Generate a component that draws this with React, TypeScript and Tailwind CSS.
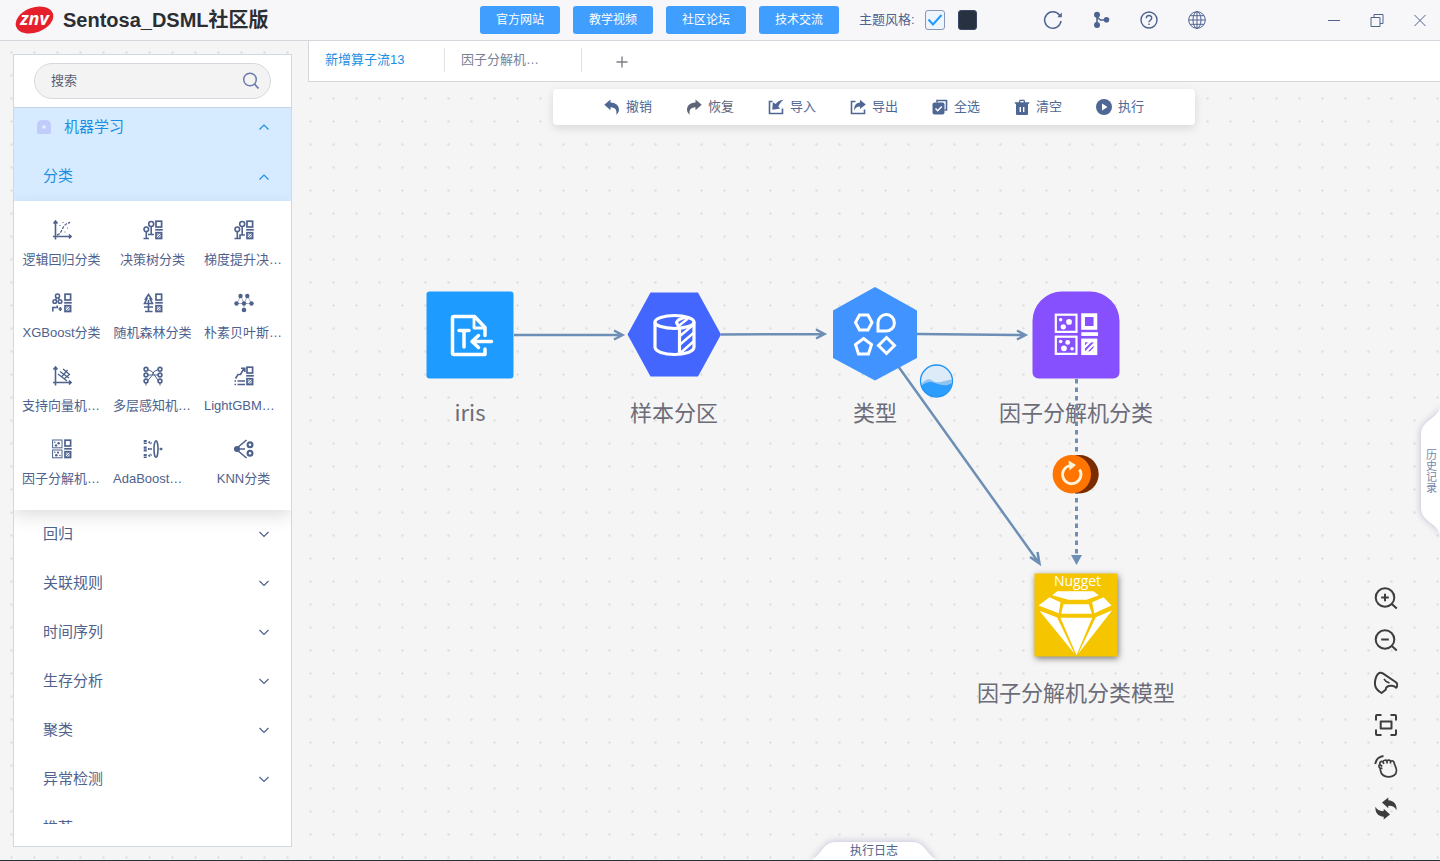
import { useState, type ReactNode } from "react";
import { clsx } from "clsx";

interface IconProps {
  className?: string;
  children?: ReactNode;
}

/* 20x20 line icon used in the operator palette */
function OpIcon({ className = "size-5", children }: IconProps) {
  return (
    <svg viewBox="0 0 20 20" className={className} fill="none" stroke="currentColor" strokeWidth="1.6" aria-hidden="true">
      {children}
    </svg>
  );
}

/* 16x16 solid icon used in the toolbar */
function ToolIcon({ children }: IconProps) {
  return (
    <svg viewBox="0 0 16 16" className="size-4" fill="currentColor" aria-hidden="true">
      {children}
    </svg>
  );
}

/* 24x24 line icon used in the floating view controls */
function ViewIcon({ children }: IconProps) {
  return (
    <svg viewBox="0 0 24 24" className="size-6" fill="none" stroke="currentColor" strokeWidth="2" strokeLinejoin="round" aria-hidden="true">
      {children}
    </svg>
  );
}

function Chevron({ up = false }: { up?: boolean }) {
  return (
    <svg viewBox="0 0 12 8" className="w-3 h-2" fill="none" stroke="currentColor" strokeWidth="1.2" aria-hidden="true">
      <path d={up ? "M1.5 6.5 6 2l4.5 4.5" : "M1.5 1 6 5.500l4.500-4.500"} />
    </svg>
  );
}

/* Squares on the right side shared by the classifier icons */
function ClassMark() {
  return (
    <>
      <rect x="13" y="1.2" width="5.6" height="5.8" strokeWidth="1.7" />
      <path d="M12.2 9.8h7.6" strokeWidth="1.7" />
      <rect x="13" y="12.7" width="5.6" height="5.8" strokeWidth="1.7" />
      <path d="m13.5 16 3-3M14 18.2l4.2-4.2M16.3 18.2l2-2" strokeWidth="1" />
    </>
  );
}

function Axes() {
  return <path d="M3.5 19.5V2M1.5 3.5l2-2.5 2 2.5M1 16.5h18M17 14.5l2 2-2 2" />;
}

function FactorGlyph() {
  return (
    <>
      <rect x=".6" y="1" width="9.4" height="7.8" strokeWidth="1" />
      <rect x=".6" y="11" width="9.4" height="7.8" strokeWidth="1" />
      <g fill="currentColor" stroke="none">
        <circle cx="2.8" cy="3.3" r=".8" />
        <circle cx="6.6" cy="4.3" r="1.3" />
        <circle cx="4" cy="6.5" r="1.2" />
        <circle cx="2.8" cy="13.2" r=".8" />
        <circle cx="6" cy="13.6" r="1.1" />
        <circle cx="4.3" cy="16.3" r="1.3" />
        <circle cx="8" cy="16.5" r=".8" />
      </g>
      <ClassMark />
    </>
  );
}

const operators = [
  {
    label: "逻辑回归分类",
    icon: (
      <OpIcon>
        <Axes />
        <path d="M5 15c6-1 4-11 13-12.500" strokeWidth="1.3" strokeDasharray="3 1.2" />
        <path d="M7.5 5.500h1M10.500 2.500h1M12.500 12h1M15 8h1" strokeWidth="1.2" />
      </OpIcon>
    ),
  },
  {
    label: "决策树分类",
    icon: (
      <OpIcon>
        <circle cx="3.3" cy="9.3" r="2.3" />
        <circle cx="8.2" cy="4" r="2.5" />
        <path d="M3.3 11.6v6.500M.5 18.500h5.500M8.200 6.500v8M5 14.500h6" />
        <ClassMark />
      </OpIcon>
    ),
  },
  {
    label: "梯度提升决…",
    icon: (
      <OpIcon>
        <circle cx="3.3" cy="9.3" r="2.3" />
        <circle cx="8.2" cy="4" r="2.5" />
        <path d="M3.3 11.6v6.500M.5 18.500h5.500v-3.500h5M8.200 6.500v8.500" />
        <ClassMark />
      </OpIcon>
    ),
  },
  {
    label: "XGBoost分类",
    icon: (
      <OpIcon>
        <circle cx="5.5" cy="3" r="2" />
        <circle cx="2.8" cy="8.5" r="1.8" />
        <circle cx="8" cy="8.5" r="1.8" />
        <path d="M4.5 5 3.500 7M6.500 5l1 2M.8 18.500v-4h4.500v-2M6.500 16h3.500M8.300 14v4" />
        <ClassMark />
      </OpIcon>
    ),
  },
  {
    label: "随机森林分类",
    icon: (
      <OpIcon>
        <path d="M5.5 1.500 2.500 6h1.300L1.500 10.500h8L7.200 6h1.300zM5.500 7v11M1 14h9M2 18.500h7.500" />
        <ClassMark />
      </OpIcon>
    ),
  },
  {
    label: "朴素贝叶斯…",
    icon: (
      <OpIcon>
        <path d="m7 3-4.500 7.500M7 3l3 7.500M13.500 3l-3.500 7.500M13.500 3l4 7.500M2.500 10.500h15M10 10.500v6.500" strokeWidth=".5" />
        <g fill="currentColor" stroke="none">
          <circle cx="6.5" cy="3" r="2.2" />
          <circle cx="13.3" cy="3" r="2.2" />
          <circle cx="2.5" cy="10.5" r="2.2" />
          <circle cx="10" cy="10.5" r="2.2" />
          <circle cx="17.5" cy="10.5" r="2.2" />
          <circle cx="10" cy="17" r="2.3" />
        </g>
      </OpIcon>
    ),
  },
  {
    label: "支持向量机…",
    icon: (
      <OpIcon>
        <Axes />
        <path d="m6 8 9 7M8 5.500l9 6.500M9.500 11l6-7M12 13l6-5M11 3l6 5" strokeWidth="1.3" />
      </OpIcon>
    ),
  },
  {
    label: "多层感知机…",
    icon: (
      <OpIcon>
        <path d="M4.5 3.500 9 5.500l2 3 4.500 6.500M15.500 3.500 11 5.500l-2 4-4.500 5.500M4.500 9h11M3 17v2.500M17 17v2.500" strokeWidth="1" />
        <circle cx="3" cy="3.3" r="1.9" />
        <circle cx="3" cy="9" r="1.9" />
        <circle cx="3" cy="15" r="1.9" />
        <circle cx="17" cy="3.3" r="1.9" />
        <circle cx="17" cy="9" r="1.9" />
        <circle cx="17" cy="15" r="1.9" />
      </OpIcon>
    ),
  },
  {
    label: "LightGBM…",
    icon: (
      <OpIcon>
        <path d="M1.5 12.500 4 8.500h2.500l3.500-6M7 2.200h3.800V6M.5 15h1.500M3.500 15H11M.5 18.500h1.500M3.500 18.500H11" />
        <ClassMark />
      </OpIcon>
    ),
  },
  {
    label: "因子分解机…",
    icon: (
      <OpIcon>
        <FactorGlyph />
      </OpIcon>
    ),
  },
  {
    label: "AdaBoost…",
    icon: (
      <OpIcon>
        <path d="M2.2 1v4M2.2 7.500v5M2.200 15v4" strokeWidth="3" strokeDasharray="2.200 .5" />
        <path d="M5.500 3l3 1.500M5 10h3.800M5.500 17l3-1.500" strokeWidth="2.200" strokeDasharray="1.700 .6" />
        <ellipse cx="13" cy="10" rx="2" ry="8.3" />
        <path d="M16.5 10h3M18 8.800v2.400" />
      </OpIcon>
    ),
  },
  {
    label: "KNN分类",
    icon: (
      <OpIcon>
        <circle cx="3" cy="10" r="2.3" fill="currentColor" />
        <path d="m3 9 9.500-8M3 11l9.500 8M6 10h5" />
        <circle cx="16" cy="5.8" r="2.4" strokeWidth="2.2" />
        <circle cx="16" cy="14.3" r="2.4" strokeWidth="2.2" />
      </OpIcon>
    ),
  },
];

const categories = ["回归", "关联规则", "时间序列", "生存分析", "聚类", "异常检测", "推荐"];

const siteLinks = ["官方网站", "教学视频", "社区论坛", "技术交流"];

const tools = [
  {
    label: "撤销",
    icon: (
      <ToolIcon>
        <path d="M.3 5.800 6.500.5v3c5 0 8.500 3 8.500 7.300 0 2-1.200 3.800-2.800 5C13.200 12 11.800 8.300 6.500 8.300v3z" />
      </ToolIcon>
    ),
  },
  {
    label: "恢复",
    muted: true,
    icon: (
      <ToolIcon>
        <path d="M15.700 5.800 9.500.5v3C4.500 3.500 1 6.500 1 10.800c0 2 1.200 3.800 2.800 5C2.800 12 4.200 8.300 9.500 8.300v3z" />
      </ToolIcon>
    ),
  },
  {
    label: "导入",
    icon: (
      <ToolIcon>
        <path d="M4.500 2.500h-3v12h13v-5" fill="none" stroke="currentColor" strokeWidth="1.6" />
        <path d="M15.500.8C11.500 1.300 9 3 7.800 5L4.800 3.300 4.300 10.800l8-1.300-2-1.800c1.200-2.800 2.700-4.700 5.200-6.900z" />
      </ToolIcon>
    ),
  },
  {
    label: "导出",
    icon: (
      <ToolIcon>
        <path d="M5.500 2.500h-4v12h13v-4" fill="none" stroke="currentColor" strokeWidth="1.6" />
        <path d="m10 .8 5.800 4.700L10 10V7.500c-3 0-4.500 1.300-6 4C4 6.500 6 3.800 10 3.500z" />
      </ToolIcon>
    ),
  },
  {
    label: "全选",
    icon: (
      <ToolIcon>
        <path d="M5 3.500v-2h9.500v9.500h-2" fill="none" stroke="currentColor" strokeWidth="1.6" />
        <rect x=".5" y="3.5" width="12" height="12" rx="2" />
        <path d="m3.500 9.500 2.200 2.200L9.800 7.500" fill="none" stroke="#fff" strokeWidth="1.5" />
      </ToolIcon>
    ),
  },
  {
    label: "清空",
    icon: (
      <ToolIcon>
        <path d="M.8 3.200h4L5.500.8h5l.7 2.400h4v1.600H.8zM6.700 2l-.3 1.200h3.200L9.300 2zM2 4.500h12V15a1 1 0 0 1-1 1H3a1 1 0 0 1-1-1z" fillRule="nonzero" />
        <path d="M6.400 2.600h3.200" fill="none" stroke="#fff" strokeWidth="1" />
        <path d="M6.300 8v5M9.700 8v5" fill="none" stroke="#fff" strokeWidth="1.4" />
      </ToolIcon>
    ),
  },
  {
    label: "执行",
    icon: (
      <ToolIcon>
        <circle cx="8" cy="8" r="8" />
        <path d="M6 4.500v7L11.500 8z" fill="#fff" />
      </ToolIcon>
    ),
  },
];

const viewControls = [
  {
    label: "放大",
    icon: (
      <ViewIcon>
        <circle cx="11" cy="11.5" r="9.3" />
        <path d="m17.800 18 5 4.500M7.200 11.500h7.600M11 7.700v7.600" />
      </ViewIcon>
    ),
  },
  {
    label: "缩小",
    icon: (
      <ViewIcon>
        <circle cx="11" cy="11.5" r="9.3" />
        <path d="m17.800 18 5 4.500M7.200 11.500h7.600" />
      </ViewIcon>
    ),
  },
  {
    label: "鹰眼",
    icon: (
      <ViewIcon>
        <path d="M6 2.700c1.300-.2 2.500.4 3.600 1.200l12 8.100c1.300 1 1.900 2 1.600 3.300-.2 1.400-.8 2.300-1.200 2.500-1.500-2.300-6.500-2.800-9-.9-1.300 1-1.300 2-1.300 2.800L7.500 23C3 20.500.8 17.500.9 13.300 1 9 2.800 3.300 6 2.700z" />
        <path d="m10 9 2.200 2.500 3.300 1.500" strokeWidth="1.7" />
      </ViewIcon>
    ),
  },
  {
    label: "适应画布",
    icon: (
      <ViewIcon>
        <path d="M2 8.500V4a1 1 0 0 1 1-1h4.500M16.500 3H21a1 1 0 0 1 1 1v4.500M22 17.500V22a1 1 0 0 1-1 1h-4.500M7.500 23H3a1 1 0 0 1-1-1v-4.500" />
        <rect x="6.700" y="9.500" width="10.800" height="7" />
      </ViewIcon>
    ),
  },
  {
    label: "拖动",
    icon: (
      <ViewIcon>
        <path d="M1.200 10C2 5.500 5 2.500 9.500 2" />
        <path d="M6 14c-1.500-1-1.500-3 0-3.300-.8-2.500 1-3.900 3-3 .5-1.700 3-2 4-.6 1-1.300 3-1.200 3.700.2 1.500-1 3-.3 3.300 1.200.5 2.500 2.500 5 2.500 8 0 4-3.500 6.500-8 6.300-5-.2-7.500-3-8-6.300zM6 10.700l2.200 1.800M9 7.700l.8 2.300M13 7.100v2.500M16.700 7.300l-.4 2.200M6 14l2.500.5" strokeWidth="1.7" />
      </ViewIcon>
    ),
  },
  {
    label: "刷新",
    icon: (
      <ViewIcon>
        <g fill="currentColor" stroke="none">
          <path d="M8 6.500 14.300 1.500v2.700c5.500.3 9 4.500 8.200 10-1.500-3.200-4.500-4.600-8.200-4.300v2.300z" />
          <path d="M16 18.500l-6.300 5v-2.700C4.200 20.500.7 16.300 1.500 10.800c1.500 3.200 4.500 4.600 8.200 4.300v-2.300z" />
        </g>
      </ViewIcon>
    ),
  },
];

const nodes = [
  {
    label: "iris",
    place: "left-[162px] top-[206px]",
    shape: (
      <>
        <rect x="3.500" y="3.500" width="87" height="87" rx="3" fill="#1e9bff" />
        <g fill="none" stroke="#fff" strokeWidth="3.5" strokeLinecap="round" strokeLinejoin="round">
          <path d="M62 61v5.500H31a1.500 1.500 0 0 1-1.500-1.500V30a1.500 1.500 0 0 1 1.500-1.500h20.500L62 39.500v8" />
          <path d="M51 29v11h10.500" strokeWidth="2.8" />
          <path d="M36 42.500h10M41 43v16" />
          <path d="M68.500 53.500H49.500M55.500 47.500l-6.500 6 6.500 6" />
        </g>
      </>
    ),
  },
  {
    label: "样本分区",
    place: "left-[366px] top-[206px]",
    shape: (
      <>
        <path d="M.5 46.500 23.500 4.500h47.500l23 42-23 42H23.500z" fill="#4366ff" />
        <g fill="none" stroke="#fff" strokeWidth="3.2" strokeLinejoin="round">
          <ellipse cx="47.500" cy="34" rx="19.500" ry="6.500" />
          <path d="M28 34v25c0 4.500 9 7.500 19.500 7.500S67 63.500 67 59V34" />
          <path d="M52.500 66V40.500l-3-6c1-2.500 5-4.500 9.500-5" />
          <path d="m53 48 13-11M53 56.500l14-12M54 64.500l13-11.500M51 38.500l10-8" strokeWidth="2.400" />
        </g>
      </>
    ),
  },
  {
    label: "类型",
    place: "left-[567px] top-[206px]",
    shape: (
      <>
        <path d="M47 -1 89 22.500v47.500L47 92.500 5 70V22.500z" fill="#4193ff" />
        <g fill="none" stroke="#fff" strokeWidth="3">
          <path d="M27.500 34.500 31.500 27h8.500l4 7.500-4 7.500h-8.500z" />
          <path d="M50 43V34.500a8.200 8.200 0 1 1 8.200 8.500z" />
          <path d="m35.500 50.500 8 6-3 9.500h-10l-3-9.500z" />
          <path d="m58.500 49.500 8 8-8 8-8-8z" />
        </g>
      </>
    ),
  },
  {
    label: "因子分解机分类",
    place: "left-[768px] top-[206px]",
    shape: (
      <>
        <path d="M3.500 33a29.500 29.500 0 0 1 29.500-29.500h28a29.500 29.500 0 0 1 29.500 29.500v51.500a6 6 0 0 1-6 6h-75a6 6 0 0 1-6-6z" fill="#8750ff" />
        <g transform="translate(25.500 24.500) scale(2.2)" fill="none" stroke="#fff" color="#fff">
          <FactorGlyph />
        </g>
      </>
    ),
  },
  {
    label: "因子分解机分类模型",
    place: "left-[768px] top-[486px]",
    shape: (
      <>
        <rect x="5.500" y="5.500" width="83" height="83" fill="#f5c500" className="drop-shadow-[1px_2px_3px_rgba(0,0,0,0.5)]" />
        <text x="48.500" y="18" textAnchor="middle" fill="#fff" className="font-['Open_Sans',sans-serif] text-[14px] font-medium">
          Nugget
        </text>
        <g transform="translate(5.5 5.5)" fill="#fff">
          <path d="M22.700 17.700h36.300l5.300 4L52 26.300H34l-16.300-4.600z" />
          <path d="m4 32 11-8.300 11 5-1.700 11z" />
          <path d="m77 32-8-8.300-11.300 5 2 11z" />
          <path d="M29 30.700h25.300l3 9.600H26.700z" />
          <path d="M26 44.300h31.700L42 81.700z" />
          <path d="m5 37.300 17.700 6.700L40 80.300z" />
          <path d="m77.700 36.700-16.400 7-17.600 36.600z" />
        </g>
      </>
    ),
  },
];

const windowButtons = [
  { label: "最小化", d: "M1 7.500h12" },
  { label: "还原", d: "M1 4.500h9v9H1zM4 4.500v-3h9v9h-3" },
  { label: "关闭", d: "M1.500 2l11 11M12.500 2l-11 11" },
];

function Header() {
  const [light, setLight] = useState(true);

  return (
    <header className="flex h-[41px] flex-shrink-0 items-center border-b border-[#d5d7dc] bg-[#f7f7fa] text-[#4f6390]">
      {/* Logo */}
      <div className="flex w-1/3 flex-shrink-0 items-center gap-[9px] pl-[15px]">
        <svg viewBox="0 0 39 30" className="h-[30px] w-[39px]" role="img" aria-label="znv">
          <ellipse cx="19.500" cy="15" rx="19.500" ry="12.500" fill="#e5202b" transform="rotate(-20 19.5 15)" />
          <text x="19.500" y="20" textAnchor="middle" fill="#fff" className="font-['Open_Sans',sans-serif] text-[18px] font-bold italic">
            znv
          </text>
        </svg>
        <h1 className="text-[20px] font-bold text-[#2b2e33]">Sentosa_DSML社区版</h1>
      </div>

      <nav className="flex gap-[13px]">
        {siteLinks.map((label) => (
          <a key={label} href="#" className="flex h-7 w-20 items-center justify-center rounded-[3px] bg-[#409eff] text-[12px] text-white">
            {label}
          </a>
        ))}
      </nav>

      {/* Theme switch */}
      <div className="ml-5 flex items-center gap-[10px] text-[13px]">
        <label htmlFor="theme-light">主题风格:</label>
        <span className="relative flex size-5">
          <input
            id="theme-light"
            type="checkbox"
            checked={light}
            onChange={() => setLight(!light)}
            className="size-5 appearance-none rounded-[3px] border border-[#8a96b5] bg-[#eef5fd]"
          />
          {light && (
            <svg viewBox="0 0 20 20" className="pointer-events-none absolute inset-0 size-5" fill="none" stroke="#1e9bff" strokeWidth="2" aria-hidden="true">
              <path d="m3.500 9.500 4.500 5 8.500-9.500" />
            </svg>
          )}
        </span>
        <button type="button" aria-label="深色主题" onClick={() => setLight(false)} className="ml-[3px] h-5 w-[19px] rounded-[3px] border border-[#3c4663] bg-[#273142]" />
      </div>

      <div className="ml-[66px] flex items-center gap-7">
        <button type="button" aria-label="刷新">
          <svg viewBox="0 0 20 20" className="size-5" fill="none" stroke="currentColor" strokeWidth="1.5">
            <path d="M16.500 5.200A8.200 8.200 0 1 0 18 11" />
            <path d="M18.800 2.500v4.800h-4.500z" fill="currentColor" stroke="none" />
          </svg>
        </button>
        <button type="button" aria-label="流程">
          <svg viewBox="0 0 20 20" className="size-5" fill="currentColor">
            <circle cx="6" cy="4.800" r="3" />
            <circle cx="6" cy="15" r="3" />
            <circle cx="15.500" cy="9.800" r="2.800" />
            <path d="M6 5v10M6 7l3.500 3H15" fill="none" stroke="currentColor" strokeWidth="1.600" />
          </svg>
        </button>
        <button type="button" aria-label="帮助">
          <svg viewBox="0 0 20 20" className="size-5" fill="none" stroke="currentColor" strokeWidth="1.4">
            <circle cx="10" cy="10" r="8" />
            <path d="M7.300 8.200C7.300 4.600 12.700 4.600 12.700 8c0 2.200-2.700 2.200-2.700 4.300M10 13.500v1.600" />
          </svg>
        </button>
        <button type="button" aria-label="语言">
          <svg viewBox="0 0 20 20" className="size-5" fill="none" stroke="currentColor" strokeWidth="1">
            <circle cx="10" cy="10" r="8.300" />
            <ellipse cx="10" cy="10" rx="4" ry="8.300" />
            <path d="M10 1.700v16.600M1.700 10h16.600M3 5.700h14M3 14.300h14" />
          </svg>
        </button>
      </div>

      <div className="ml-auto flex items-center gap-[29px] pr-[13px]">
        {windowButtons.map((b) => (
          <button key={b.label} type="button" aria-label={b.label}>
            <svg viewBox="0 0 14 14" className="size-[14px]" fill="none" stroke="currentColor" strokeWidth="1">
              <path d={b.d} />
            </svg>
          </button>
        ))}
      </div>
    </header>
  );
}

function Sidebar() {
  return (
    <aside className="mb-[13px] ml-[13px] mt-[13px] flex w-[279px] flex-shrink-0 flex-col border border-[#d0d8e2] bg-white pb-[22px] text-[15px] text-[#4e628d]">
      {/* Search */}
      <div className="border-b border-[#c3d6e8] px-5 py-2">
        <div className="flex h-9 items-center rounded-full border border-[#d5d8de] bg-[#f3f3f4] pl-4 pr-[10px]">
          <input type="text" aria-label="搜索" placeholder="搜索" className="min-w-0 flex-1 bg-transparent text-[13px] outline-none placeholder:text-[#5b5f73]" />
          <svg viewBox="0 0 18 18" className="size-[18px]" fill="none" stroke="#6b7bab" strokeWidth="1.5" aria-hidden="true">
            <circle cx="8" cy="7.500" r="6.300" />
            <path d="m12.500 12 4 4.500" strokeWidth="1.8" />
          </svg>
        </div>
      </div>

      <div className="min-h-0 flex-1 overflow-y-auto [scrollbar-width:none]">
        <div className="bg-[#d6ebff] text-[#1c8fe3]">
          <button type="button" className="flex h-11 w-full items-center pb-1.5 pl-[23px] pr-[21px]">
            <svg viewBox="0 0 14 14" className="mr-[13px] size-[14px]" aria-hidden="true">
              <path d="M0 5a5 5 0 0 1 5-5h4a5 5 0 0 1 5 5v8a1 1 0 0 1-1 1H1a1 1 0 0 1-1-1z" fill="#c1ccfb" />
              <circle cx="7" cy="7" r="1.800" fill="#e6edff" />
            </svg>
            <span className="flex-1 text-left">机器学习</span>
            <Chevron up />
          </button>
          <button type="button" className="flex h-[49px] w-full items-center pl-[29px] pr-[21px]">
            <span className="flex-1 text-left">分类</span>
            <Chevron up />
          </button>
        </div>

        {/* Operators */}
        <div className="relative grid grid-cols-3 gap-y-[23px] bg-white px-0.5 pb-[21px] pt-[19px] text-[13px] shadow-[0_6px_16px_rgba(0,0,0,0.13)]">
          {operators.map((op) => (
            <button key={op.label} type="button" className="flex flex-col items-center gap-[10px] leading-5">
              {op.icon}
              <span className={clsx("w-[79px] whitespace-nowrap", op.label.endsWith("…") ? "text-left" : "text-center")}>{op.label}</span>
            </button>
          ))}
        </div>

        {categories.map((name) => (
          <button key={name} type="button" className="flex h-[49px] w-full items-center pl-[29px] pr-[21px]">
            <span className="flex-1 text-left">{name}</span>
            <Chevron />
          </button>
        ))}
      </div>
    </aside>
  );
}

function Tabs() {
  return (
    <div className="flex h-[41px] flex-shrink-0 items-center border-b border-l border-[#d5d7dc] bg-white pb-0.5 text-[13px] text-[#7b8294]">
      <button type="button" className="h-6 w-[136px] border-r border-[#dfe1e6] pl-4 text-left text-[#1c8fe3]">
        新增算子流13
      </button>
      <button type="button" className="h-6 w-[137px] border-r border-[#dfe1e6] pl-4 text-left">
        因子分解机…
      </button>
      <button type="button" aria-label="新建" className="ml-[34px] pt-1">
        <svg viewBox="0 0 12 12" className="size-3" fill="none" stroke="#7d8085" strokeWidth="1.4">
          <path d="M6 .5v11M.5 6h11" />
        </svg>
      </button>
    </div>
  );
}

function Flow() {
  return (
    <>
      <svg className="absolute inset-0 size-full" fill="none" stroke="#6e8fb5" strokeWidth="2.5" aria-hidden="true">
        <g transform="translate(-308 -82)">
          <path d="M514 335h108M614 330.500l8.500 4.500-8.500 4.500" />
          <path d="M721 334.500l103-.5M816 329.500l8.500 4.500-8.500 4.500" />
          <path d="M917 334l108 1M1017 330.500l8.500 4.500-8.500 4.500" />
          <path d="M898 366l141 197M1030 557l9.500 6.500-2-11.500" />
        </g>
      </svg>

      {nodes.map((n) => (
        <div key={n.label} className={clsx("absolute flex -translate-x-1/2 flex-col items-center gap-[13px]", n.place)}>
          <svg viewBox="0 0 94 94" className="size-[94px] overflow-visible" aria-hidden="true">
            {n.shape}
          </svg>
          <span className="whitespace-nowrap font-['Noto_Sans_CJK_SC',sans-serif] text-[22px] leading-8 text-[#6c6c78]">{n.label}</span>
        </div>
      ))}

      {/* Model link with rerun badge and running indicator */}
      <svg className="pointer-events-none absolute inset-0 size-full" fill="none" aria-hidden="true">
        <g transform="translate(-308 -82)">
          <path d="M1076.500 379v178" stroke="#6e8fb5" strokeWidth="3" strokeDasharray="4.500 4" />
          <path d="M1071 555h11l-5.500 10z" fill="#6e8fb5" />
          <circle cx="1079.500" cy="474.200" r="19.200" fill="#7a2c00" />
          <circle cx="1071.800" cy="474.200" r="19.200" fill="#ff7500" />
          <path d="M1079.500 469.500a9.200 9.200 0 1 1-9.500-4" stroke="#fff3dc" strokeWidth="2.800" />
          <path d="M1068.500 460.500l7.500 4.500-6.500 5.500z" fill="#fff3dc" />
          <circle cx="936.500" cy="381" r="16" fill="#ddebf8" />
          <path d="M921 384c5-5 8-6 12-3s10 0 19-1.500a16 16 0 0 1-31 4.500z" fill="#90c3f0" />
          <path d="M921 386c5-4 9-5 14-3s11 4 17 0a16 16 0 0 1-31 3z" fill="#2a9dff" />
          <circle cx="936.500" cy="381" r="16" stroke="#1f93f2" strokeWidth="1.300" />
        </g>
      </svg>
    </>
  );
}

export default function App() {
  return (
    <div className="flex h-screen flex-col overflow-hidden border-b border-[#2b3136] bg-[#f5f5f5] font-['Liberation_Sans','Noto_Sans_CJK_SC',sans-serif]">
      <Header />

      <main className="flex min-h-0 flex-1 bg-[radial-gradient(circle,#e0e0e0_0.8px,transparent_1.6px)] bg-[length:23px_23px]">
        <Sidebar />

        <div className="ml-4 flex min-w-0 flex-1 flex-col">
          <Tabs />

          <section className="relative min-h-0 flex-1 overflow-hidden">
            <Flow />

            {/* Toolbar */}
            <div className="relative mx-auto mt-[7px] flex h-9 w-fit items-center gap-[34px] rounded-[4px] bg-white px-[51px] text-[13px] shadow-[0_3px_10px_rgba(0,0,0,0.12)]">
              {tools.map((t) => (
                <button key={t.label} type="button" className={clsx("flex items-center gap-[6px]", t.muted ? "text-[#5f6478]" : "text-[#4f6794]")}>
                  {t.icon}
                  {t.label}
                </button>
              ))}
            </div>

            {/* View controls */}
            <div className="absolute bottom-10 right-[42px] flex flex-col gap-[18px] text-[#3d3d3d]">
              {viewControls.map((v) => (
                <button key={v.label} type="button" aria-label={v.label}>
                  {v.icon}
                </button>
              ))}
            </div>

            {/* History drawer handle */}
            <button type="button" className="absolute right-0 top-[318px] flex h-[142px] w-5 items-center justify-center text-[11px] text-[#7685ad]">
              <svg viewBox="0 0 20 142" className="absolute inset-0 h-full w-5 overflow-visible drop-shadow-[-1px_0_3px_rgba(90,90,160,0.3)]" aria-hidden="true">
                <path d="M21 2c0 8-4 12-9 16S1 26 1 34v74c0 8 6 12 11 16s9 8 9 16z" fill="#fff" />
              </svg>
              <span className="relative pl-px leading-4 [writing-mode:vertical-rl]">历史记录</span>
            </button>

            {/* Log drawer handle */}
            <button type="button" className="absolute bottom-0 left-1/2 flex h-[19px] w-[132px] -translate-x-1/2 items-center justify-center text-[12px] text-[#4e628d]">
              <svg viewBox="0 0 132 20" className="absolute inset-0 h-5 w-full overflow-visible drop-shadow-[0_-1px_3px_rgba(90,90,160,0.3)]" aria-hidden="true">
                <path d="M0 20c6-1 9-5 13-10S20 1 28 1h76c8 0 11 4 15 9s7 9 13 10z" fill="#fff" />
              </svg>
              <span className="relative">执行日志</span>
            </button>
          </section>
        </div>
      </main>
    </div>
  );
}
